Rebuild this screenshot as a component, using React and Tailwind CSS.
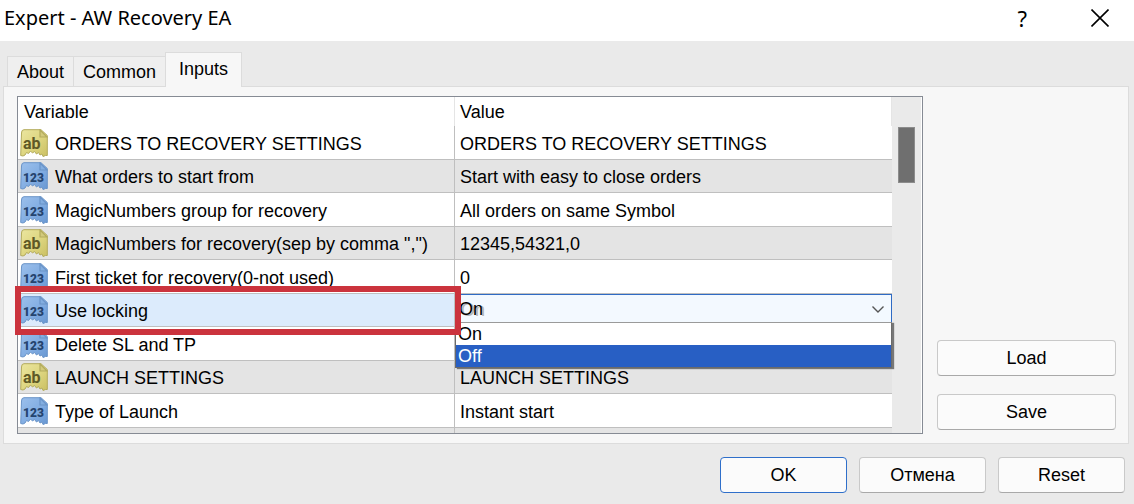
import React, { useState } from "react";
import clsx from "clsx";

const TABS = ["About", "Common", "Inputs"];

const ROWS = [
    { type: "string", name: "ORDERS TO RECOVERY SETTINGS", value: "ORDERS TO RECOVERY SETTINGS" },
    { type: "number", name: "What orders to start from", value: "Start with easy to close orders" },
    { type: "number", name: "MagicNumbers group for recovery", value: "All orders on same Symbol" },
    { type: "string", name: 'MagicNumbers for recovery(sep by comma ",")', value: "12345,54321,0" },
    { type: "number", name: "First ticket for recovery(0-not used)", value: "0" },
    { type: "number", name: "Use locking", options: ["On", "Off"] },
    { type: "number", name: "Delete SL and TP", value: "" },
    { type: "string", name: "LAUNCH SETTINGS", value: "LAUNCH SETTINGS" },
    { type: "number", name: "Type of Launch", value: "Instant start" },
];

// Sheet with a folded corner and a torn bottom edge
const TypeIcon = ({ type }) => {
    const isString = type === "string";
    const stroke = isString ? "#b3ab5c" : "#6a94c8";

    return (
        <svg viewBox="0 0 28 28" className="size-7 shrink-0" aria-hidden="true">
            <defs>
                <linearGradient id="sheet-string" x1="0" y1="0" x2="1" y2="1">
                    <stop offset="0" stopColor="#ebe6a0" />
                    <stop offset="0.55" stopColor="#ddd57f" />
                    <stop offset="1" stopColor="#cbc062" />
                </linearGradient>
                <linearGradient id="sheet-number" x1="0" y1="0" x2="1" y2="1">
                    <stop offset="0" stopColor="#9cc0ec" />
                    <stop offset="0.55" stopColor="#82ade2" />
                    <stop offset="1" stopColor="#6897d2" />
                </linearGradient>
            </defs>
            <path
                d="M4 .7H21L27.3 6.5V26.5H25.5L23 27.5L22 25L20 26L18.5 23.5L16.5 25L14.5 22.5L12.5 24L10.5 22L8.5 24.5L6.5 23.5L5 26L3 27L.7 26.5L1.5 4Q1.5 .7 4 .7Z"
                fill={isString ? "url(#sheet-string)" : "url(#sheet-number)"}
                stroke={stroke}
                strokeLinejoin="round"
            />
            <path d="M20 1V8H27Z" fill={isString ? "#d3ca7c" : "#83aee0"} stroke={stroke} strokeWidth="1.2" />
            {isString ? (
                <text x="3" y="20" fontSize="16" fontWeight="700" fill="#5f5926" className="font-['Roboto',sans-serif]">ab</text>
            ) : (
                <text x="3" y="20" fontSize="12" fontWeight="900" fill="#25446f" className="font-['Roboto',sans-serif]">123</text>
            )}
        </svg>
    );
};

const DialogButton = ({ primary, className, children }) => (
    <button
        type="button"
        className={clsx(
            "h-9 rounded-sm border bg-[#fbfbfb]",
            primary ? "border-[#2f6fca]" : "border-[#c9c9c9] border-b-[#a9a9a9]",
            className
        )}
    >
        {children}
    </button>
);

const App = () => {
    const [activeTab, setActiveTab] = useState("Inputs");
    const [locking, setLocking] = useState("On");

    return (
        <div className="min-h-screen bg-[#eaeaea] font-['Liberation_Sans',Arial,sans-serif] text-lg text-black">
            {/* Title bar */}
            <header className="flex h-[41px] items-center justify-between bg-white pr-[25px] pb-[5px] pl-1 font-['Noto_Sans',sans-serif] text-xl">
                <h1>Expert - AW Recovery EA</h1>
                <div className="flex items-center gap-[64px]">
                    <button type="button" aria-label="Help" className="text-[22px] leading-7">?</button>
                    <button type="button" aria-label="Close">
                        <svg viewBox="0 0 18 18" className="size-[18px]" fill="none" stroke="#000" strokeWidth="1.6">
                            <path d="M.5 .5L17.5 17.5M17.5 .5L.5 17.5" />
                        </svg>
                    </button>
                </div>
            </header>

            <main className="pt-[11px] pr-[5px] pl-[3px]">
                {/* Tabs */}
                <div role="tablist" className="flex items-end pl-1">
                    {TABS.map((tab) => (
                        <button
                            key={tab}
                            type="button"
                            role="tab"
                            aria-selected={tab === activeTab}
                            onClick={() => setActiveTab(tab)}
                            className={clsx(
                                "border-t border-l border-[#dcdcdc]",
                                tab === activeTab
                                    ? "relative -mb-px h-[35px] border-r bg-[#f7f7f7] px-[13px] pb-[3px]"
                                    : "h-[30px] bg-[#efefef] px-[9px] pt-px"
                            )}
                        >
                            {tab}
                        </button>
                    ))}
                </div>

                <section className="flex gap-[14px] border border-[#dcdcdc] bg-[#f7f7f7] py-[9px] pr-3 pl-[13px]">
                    {/* Inputs list */}
                    <div className="relative min-w-0 flex-1">
                        <div className="flex h-[338px] overflow-hidden border border-[#868b94] bg-white">
                            <div className="min-w-0 flex-1">
                                <table className="w-full table-fixed border-separate border-spacing-0 text-left whitespace-nowrap">
                                    <thead>
                                        <tr className="h-[29px] leading-[27px]">
                                            <th className="border-r border-[#e5e5e5] p-0 pt-0.5 pl-1.5 font-normal">Variable</th>
                                            <th className="border-r border-[#e5e5e5] p-0 pt-0.5 pl-[5px] font-normal">Value</th>
                                        </tr>
                                    </thead>
                                    <tbody>
                                        {ROWS.map((row) => (
                                            <tr key={row.name} className="h-[34px] even:h-[33px] even:bg-[#e4e4e4]">
                                                <td
                                                    className={clsx(
                                                        "border-r border-b border-[#bfbfbf] p-0 pl-0.5",
                                                        row.options && "bg-[#dcebfc]"
                                                    )}
                                                >
                                                    <div className="flex items-center gap-[7px]">
                                                        <TypeIcon type={row.type} />
                                                        {row.options ? (
                                                            <label htmlFor="locking" className="pt-0.5">{row.name}</label>
                                                        ) : (
                                                            <span className="pt-0.5">{row.name}</span>
                                                        )}
                                                    </div>
                                                </td>
                                                <td className={clsx("border-b border-[#bfbfbf] p-0", row.options ? "bg-white align-top" : "pt-0.5 pl-[5px]")}>
                                                    {row.options ? (
                                                        <div className="relative">
                                                            <select
                                                                id="locking"
                                                                value={locking}
                                                                onChange={(e) => setLocking(e.target.value)}
                                                                className="block h-[29px] w-full appearance-none border border-[#2f6bc4] bg-[#f3f9ff] pl-[3px] leading-7 text-shadow-[2px_1px_0_#b4b4b4]"
                                                            >
                                                                {row.options.map((option) => (
                                                                    <option key={option}>{option}</option>
                                                                ))}
                                                            </select>
                                                            <svg viewBox="0 0 12 7" className="pointer-events-none absolute top-3 right-2 h-[7px] w-3" fill="none" stroke="#555" strokeWidth="1.4">
                                                                <path d="M.5 .5L6 6L11.5 .5" />
                                                            </svg>
                                                        </div>
                                                    ) : (
                                                        row.value
                                                    )}
                                                </td>
                                            </tr>
                                        ))}
                                        {/* Next row, mostly scrolled out of view */}
                                        <tr aria-hidden="true" className="h-[33px] bg-[#e4e4e4]">
                                            <td className="border-r border-[#bfbfbf]" />
                                            <td />
                                        </tr>
                                    </tbody>
                                </table>
                            </div>

                            {/* Scrollbar */}
                            <div className="w-[30px] border-r border-white bg-[#eaeaea] pt-[30px] pl-1.5">
                                <div className="h-14 w-[17px] border border-[#8c8c8c] bg-[#6f6f6f]" />
                            </div>
                        </div>

                        {/* Opened drop-down */}
                        <ul
                            role="listbox"
                            aria-label="Use locking"
                            className="absolute top-[226px] right-[31px] left-[438px] border border-[#6b6b6b] border-t-[#9a9a9a] bg-white leading-[22px] shadow-[2px_1px_1px_#777]"
                        >
                            <li role="option" aria-selected="false" className="pl-0.5">On</li>
                            <li role="option" aria-selected="true" className="bg-[#285fc4] pl-0.5 text-white">Off</li>
                        </ul>

                        {/* Highlight frame */}
                        <div className="pointer-events-none absolute top-[190px] right-[462px] -left-0.5 h-[49px] border-[6px] border-[#cb333d]" />
                    </div>

                    <div className="flex w-[179px] flex-col justify-end gap-[18px] pb-1">
                        <DialogButton>Load</DialogButton>
                        <DialogButton>Save</DialogButton>
                    </div>
                </section>
            </main>

            <footer className="flex justify-end gap-3 pt-[13px] pr-[9px]">
                <DialogButton primary className="w-[127px]">OK</DialogButton>
                <DialogButton className="w-[127px]">Отмена</DialogButton>
                <DialogButton className="w-[127px]">Reset</DialogButton>
            </footer>
        </div>
    );
};

export default App;
